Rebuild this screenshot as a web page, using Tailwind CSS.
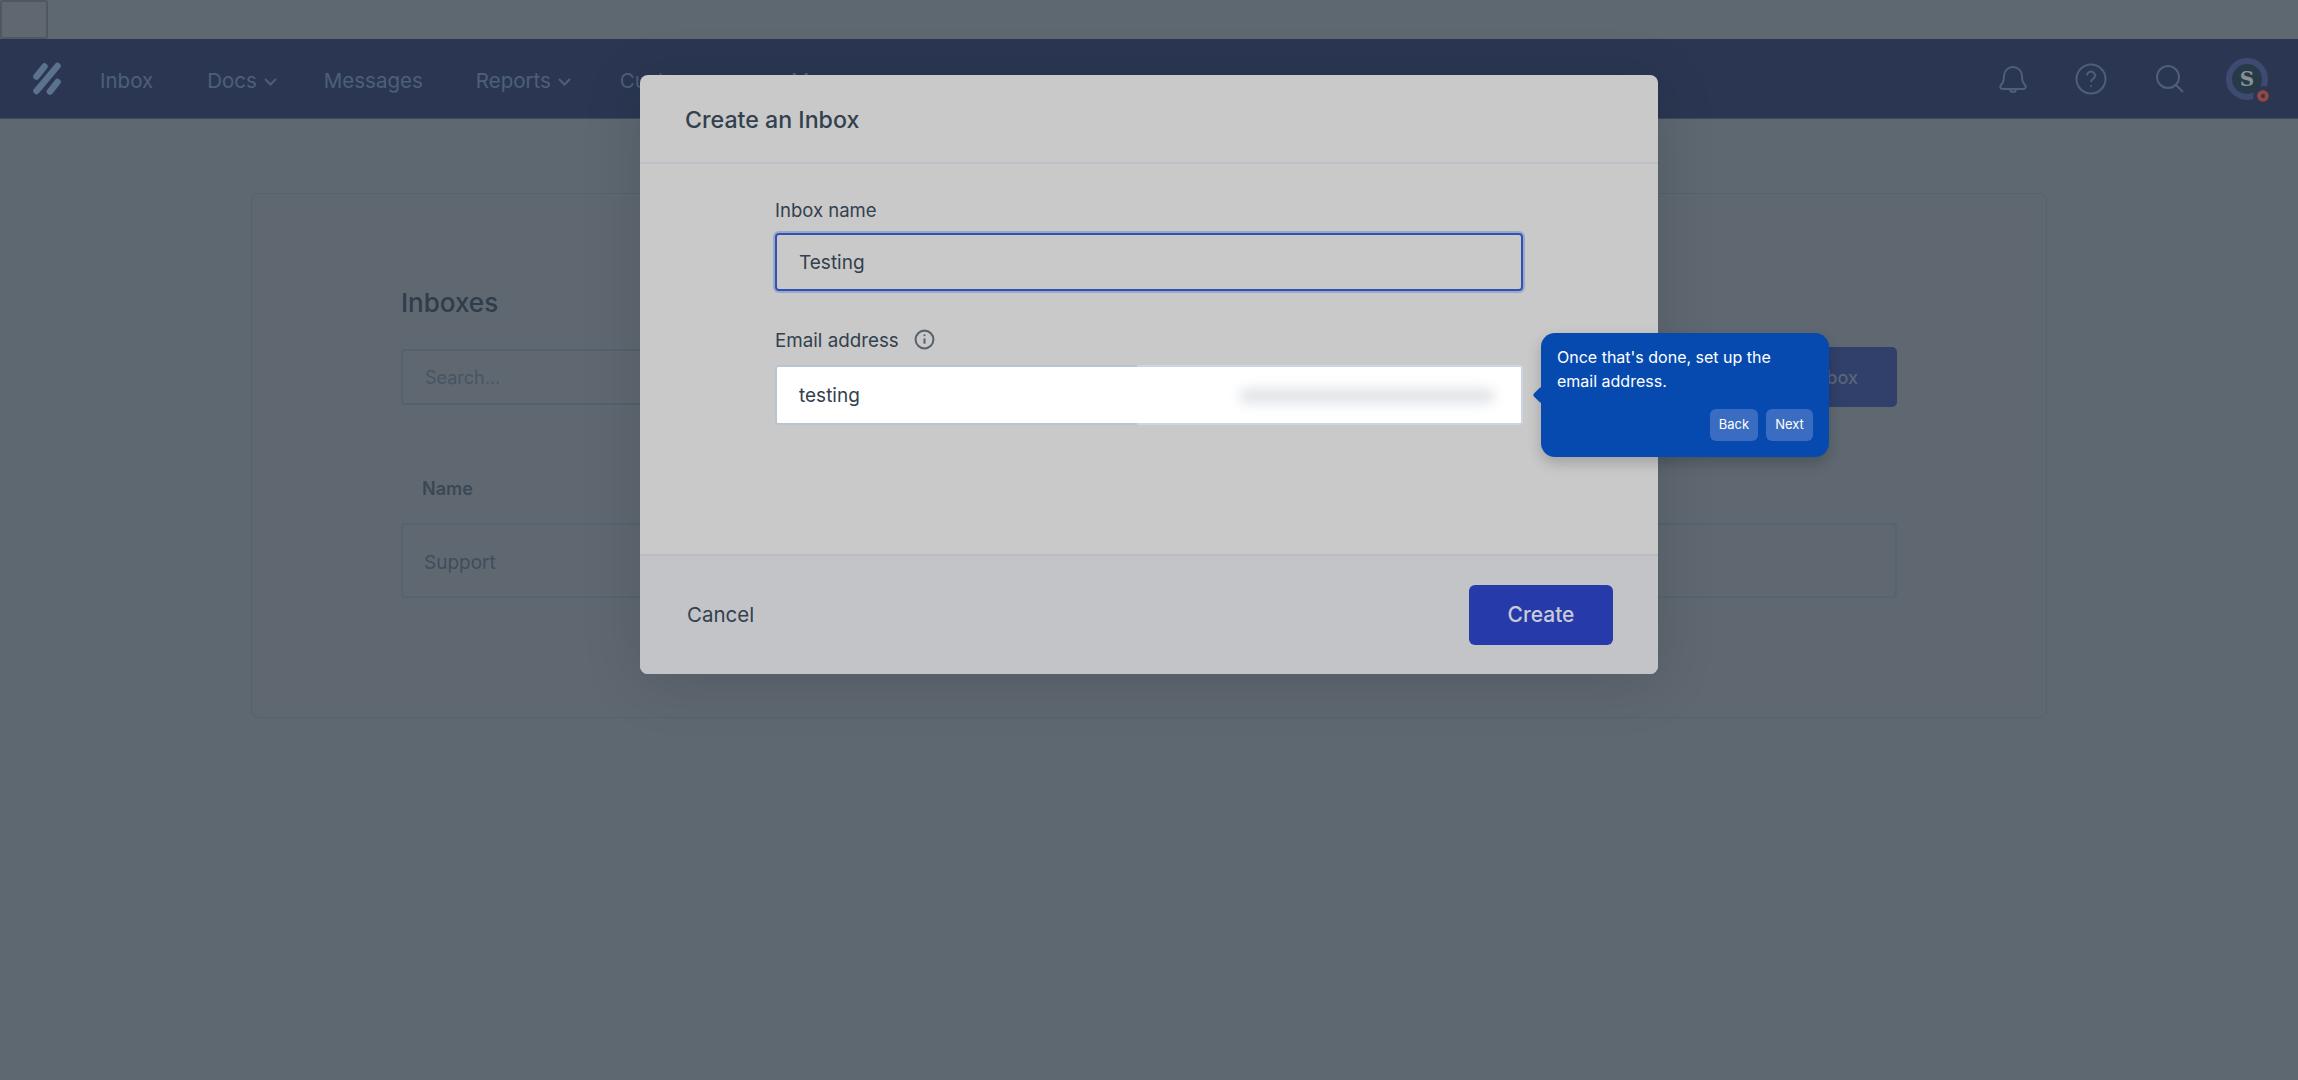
<!DOCTYPE html>
<html>
<head>
<meta charset="utf-8">
<script src="https://cdn.jsdelivr.net/npm/@tailwindcss/browser@4"></script>
</head>
<body class="m-0 bg-[#5f6871] font-['Inter','Liberation_Sans',sans-serif]">
<div class="relative w-[2298px] h-[1080px] overflow-hidden bg-[#5e6871]">
  <div class="h-[39px]">
    <div class="w-[48px] h-[39px] rounded-[3px] border-2 border-[#4f5861] bg-[#5f6871]"></div>
  </div>
  <nav class="h-[80px] bg-[#2b3752] border-b border-[#3d4963] flex items-center pl-[33px] pr-[30px] text-[20.5px] text-[#4d6078]">
    <svg class="w-[28px] h-[33px] mr-[39px]" viewBox="0 0 28 33" fill="none" stroke="#5a728c" stroke-width="6.500" stroke-linecap="round"><path d="M3.500 14.500 L11.500 4.500"/><path d="M3.500 29 L24.500 4"/><path d="M17 29.500 L24.500 20"/></svg>
    <span class="pt-[5px]">Inbox</span>
    <span class="ml-[54px] pt-[5px]">Docs</span>
    <svg class="w-[13px] h-[8px] ml-[7px] mt-[6px]" viewBox="0 0 13 8" fill="none" stroke="#4d6078" stroke-width="2"><path d="M1 1l5.500 5.500L12 1"/></svg>
    <span class="ml-[47px] pt-[5px]">Messages</span>
    <span class="ml-[53px] pt-[5px]">Reports</span>
    <svg class="w-[13px] h-[8px] ml-[7px] mt-[6px]" viewBox="0 0 13 8" fill="none" stroke="#4d6078" stroke-width="2"><path d="M1 1l5.500 5.500L12 1"/></svg>
    <span class="ml-[49px] pt-[5px]">Customers</span>
    <span class="ml-[66px] pt-[5px]">Manage</span>
    <div class="ml-auto flex items-center">
      <svg class="w-[28px] h-[31px]" viewBox="0 0 28 31" fill="none" stroke="#4d6078" stroke-width="2"><path d="M5 13a9 9 0 0 1 18 0c0 5 1 7 3 9 1.500 1.500.5 4-1.500 4H3.500c-2 0-3-2.500-1.500-4 2-2 3-4 3-9z"/><path d="M11 26c0 4 6 4 6 0"/></svg>
      <svg class="w-[32px] h-[32px] ml-[48px]" viewBox="0 0 32 32" fill="none" stroke="#4d6078" stroke-width="2"><circle cx="16" cy="16" r="14.500"/><path d="M12 12.500a4 4 0 1 1 6 3.500c-1.500.8-2 1.500-2 3"/><circle cx="16" cy="23" r="1" fill="#4d6078" stroke="none"/></svg>
      <svg class="w-[28px] h-[28px] ml-[49px]" viewBox="0 0 28 28" fill="none" stroke="#4d6078" stroke-width="2"><circle cx="12" cy="12" r="11"/><path d="M20 20l7 7"/></svg>
      <div class="relative w-[42px] h-[42px] ml-[42px] rounded-full border-[6px] border-[#3f4a73] flex items-center justify-center bg-[#263a4a] text-[#8a9192] font-['DejaVu_Serif',serif] font-bold text-[20px] leading-none">S
        <span class="absolute left-[25px] top-[26px] w-[12px] h-[12px] rounded-full border-[4px] border-[#93483f] bg-[#2b3752] outline-[4px] outline-[#2b3752]"></span>
      </div>
    </div>
  </nav>

  <section class="ml-[251px] mt-[74px] w-[1796px] h-[525px] rounded-[8px] border border-[#58626c] bg-[#5f6871] px-[149px] pt-[93px] text-[#3f4d5c]">
    <h1 class="text-[26px] leading-[32px] font-medium text-[#2f3c4a]">Inboxes</h1>
    <div class="mt-[28px] flex justify-between items-center">
      <div class="w-[900px] h-[56px] rounded-[4px] border-2 border-[#55616d] flex items-center pl-[22px] text-[18px] text-[#465564]">Search...</div>
      <div class="w-[240px] h-[60px] rounded-[5px] bg-[#30406a] flex items-center justify-end pr-[39px] text-[18px] font-medium text-[#5b6478]">Create Inbox</div>
    </div>
    <div class="mt-[70px] pl-[21px] text-[18px] leading-[24px] font-semibold text-[#3a4856] h-[46px]">Name</div>
    <div class="h-[75px] rounded-[4px] border-2 border-[#57636e] flex items-center pl-[21px] pt-[6px] text-[19px]">Support</div>
  </section>

  <div class="absolute left-[640px] top-[75px] w-[1018px] h-[599px] rounded-[8px] overflow-hidden bg-[#c9c9c9] shadow-[0_8px_60px_rgba(0,0,0,0.14)] flex flex-col text-[#33404e]">
    <div class="h-[89px] border-b-2 border-[#bcc1c7] pl-[45px] flex items-center text-[23.200px] font-medium leading-none pt-[4px]">Create an Inbox</div>
    <div class="flex-1 pl-[135px] pt-[33px]">
      <div class="text-[18.500px] leading-[26px]">Inbox name</div>
      <div class="mt-[10px] w-[748px] h-[58px] rounded-[4px] border-2 border-[#3450b4] ring-[2px] ring-[#98aac7] flex items-center pl-[22px] pt-[2px] text-[19px]">Testing</div>
      <div class="mt-[37px] flex items-center text-[18.800px] leading-[26px]">
        Email address
        <svg class="w-[21px] h-[21px] ml-[15px] mt-[-3px]" viewBox="0 0 20 20" fill="none" stroke="#58636f" stroke-width="2"><circle cx="10" cy="10" r="8.500"/><path d="M10 9v5"/><circle cx="10" cy="6" r="1" fill="#58636f" stroke="none"/></svg>
      </div>
    </div>
    <div class="h-[120px] border-t-2 border-[#b9bcc3] bg-[#c3c4c8] flex items-center justify-between pl-[47px] pr-[45px]">
      <span class="text-[20.500px]">Cancel</span>
      <span class="w-[144px] h-[60px] rounded-[6px] bg-[#263aaa] flex items-center justify-center text-[21px] font-medium text-[#c9cbd6]">Create</span>
    </div>
  </div>

  <div class="absolute left-[775px] top-[365px] w-[748px] h-[60px] rounded-[3px] bg-white border-2 border-[#ccd5e0] flex items-center pl-[22px] pt-[2px] text-[19px] text-[#33404e]">
    testing
    <div class="absolute left-[-2px] top-[-2px] w-[362px] h-[60px] rounded-l-[3px] border-y-2 border-l-2 border-[#b8c4d2]"></div>
    <div class="absolute left-[462px] top-[21px] w-[256px] h-[16px] rounded-full bg-[#e2e5e9] blur-[6px]"></div>
  </div>

  <div class="absolute left-[1541px] top-[333px] w-[288px] h-[124px] rounded-[14px] bg-[#064ab0] shadow-[0_6px_14px_rgba(0,0,0,0.2)] px-[16px] pt-[12px] text-white">
    <div class="absolute left-[-6px] top-[56px] w-[12px] h-[12px] rotate-45 rounded-[2px] bg-[#064ab0]"></div>
    <p class="relative text-[16px] leading-[24px]">Once that's done, set up the email address.</p>
    <div class="absolute right-[16px] bottom-[16px] flex gap-[8px] text-[13px]">
      <span class="w-[48px] h-[32px] rounded-[6px] bg-[#3a6cc1] flex items-center justify-center">Back</span>
      <span class="w-[47px] h-[32px] rounded-[6px] bg-[#3a6cc1] flex items-center justify-center">Next</span>
    </div>
  </div>
</div>
</body>
</html>
